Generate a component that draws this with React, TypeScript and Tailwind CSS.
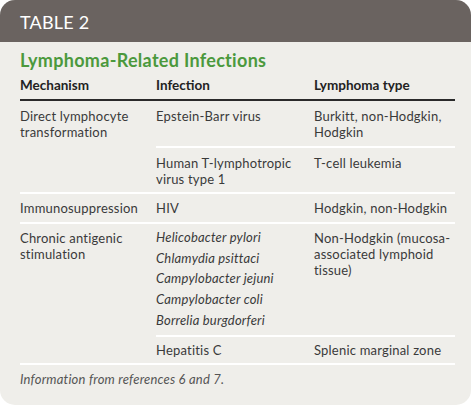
import React from 'react';

const font = { fontFamily: 'Lato, "Open Sans", sans-serif' };

function Cell({ w, children, className = '' }: { w: string; children: React.ReactNode; className?: string }) {
  return <div className={`${w} shrink-0 ${className}`}>{children}</div>;
}

export default function App() {
  return (
    <div className="w-[474px] h-[406px] bg-white" style={font}>
      <div className="w-[471px] h-[405px] rounded-[15px] overflow-hidden bg-[#efeeea]">
        <div className="h-[42px] bg-[#6a6360] px-5 flex items-center">
          <span className="text-white text-[18px] tracking-[0.2px] pt-[2px]">TABLE 2</span>
        </div>

        <div className="pl-5 pr-4">
          <h2 className="text-[#4b993d] font-bold text-[18px] leading-[22px] pt-[7px] tracking-[0.3px]">
            Lymphoma-Related Infections
          </h2>

          <div className="flex text-[13.5px] font-bold text-[#222] border-b-2 border-[#2a2a2a] pt-[4px] pb-[4px] leading-[20px]">
            <Cell w="w-[136px]">Mechanism</Cell>
            <Cell w="w-[158px]">Infection</Cell>
            <Cell w="w-[141px]">Lymphoma type</Cell>
          </div>

          <div className="text-[13px] leading-4 text-[#3a3a3a] tracking-[0.2px]">
            <div className="flex border-b-2 border-white">
              <Cell w="w-[136px]" className="pt-[7px] pr-2">Direct lymphocyte transformation</Cell>
              <div className="flex-1">
                <div className="flex border-b-2 border-white pt-[7px] pb-[6px]">
                  <Cell w="w-[158px]" className="pr-2">Epstein-Barr virus</Cell>
                  <Cell w="w-[141px]">Burkitt, non-Hodgkin, Hodgkin</Cell>
                </div>
                <div className="flex pt-[7px] pb-[5px]">
                  <Cell w="w-[158px]" className="pr-2">Human T-lymphotropic virus type 1</Cell>
                  <Cell w="w-[141px]">T-cell leukemia</Cell>
                </div>
              </div>
            </div>

            <div className="flex border-b-2 border-white pt-[6px] pb-[6px]">
              <Cell w="w-[136px]" className="pr-2">Immunosuppression</Cell>
              <Cell w="w-[158px]" className="pr-2">HIV</Cell>
              <Cell w="w-[141px]">Hodgkin, non-Hodgkin</Cell>
            </div>

            <div className="flex border-b-2 border-white">
              <Cell w="w-[136px]" className="pt-[6px] pr-2">Chronic antigenic stimulation</Cell>
              <div className="flex-1">
                <div className="flex border-b-2 border-white">
                  <Cell w="w-[158px]" className="italic leading-[20.7px] pt-[3px] pb-[4px] pr-2">
                    <div>Helicobacter pylori</div>
                    <div>Chlamydia psittaci</div>
                    <div>Campylobacter jejuni</div>
                    <div>Campylobacter coli</div>
                    <div>Borrelia burgdorferi</div>
                  </Cell>
                  <Cell w="w-[141px]" className="pt-[6px]">Non-Hodgkin (mucosa-associated lymphoid tissue)</Cell>
                </div>
                <div className="flex pt-[5px] pb-[5px]">
                  <Cell w="w-[158px]" className="pr-2">Hepatitis C</Cell>
                  <Cell w="w-[141px]">Splenic marginal zone</Cell>
                </div>
              </div>
            </div>

            <p className="italic text-[#555] pt-[6px]">Information from references 6 and 7.</p>
          </div>
        </div>
      </div>
    </div>
  );
}
